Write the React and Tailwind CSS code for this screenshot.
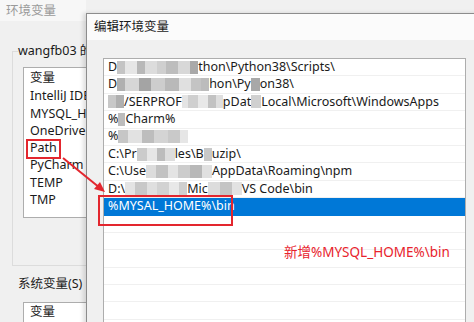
import React from "react";

const font = { fontFamily: '"Noto Sans", "Noto Sans CJK SC", sans-serif' };

// mosaic blocks standing in for the blurred parts of the paths
function Blur({ cells }) {
  return (
    <span className="inline-flex items-center h-[13px] align-middle shrink-0">
      {cells.map(([w, c], i) => (
        <span key={i} className="inline-block h-full" style={{ width: w, background: c }} />
      ))}
    </span>
  );
}

const rows = [
  [["D"], [[8, "#c4c4c4"], [12, "#e6e6e6"], [8, "#b8b8b8"], [12, "#dcdcdc"], [9, "#cfcfcf"], [12, "#bdbdbd"], [12, "#d8d8d8"], [8, "#a9a9a9"]], ["thon\\Python38\\Scripts\\"]],
  [["D"], [[8, "#b0b0b0"], [14, "#d6d6d6"], [12, "#a4a4a4"], [14, "#cdcdcd"], [14, "#b9b9b9"], [12, "#e0e0e0"], [10, "#c4c4c4"], [8, "#bcbcbc"]], ["hon\\Py"], [[9, "#a8a8a8"]], ["on38\\"]],
  [[[8, "#c8c8c8"], [8, "#b0b0b0"]], ["/SERPROF"], [[6, "#e4e4e4"], [10, "#cfcfcf"], [10, "#e8e8e8"], [8, "#c2c2c2"], [7, "#dedede"]], ["pDat"], [[10, "#d0d0d0"]], ["Local\\Microsoft\\WindowsApps"]],
  [["% "], [[7, "#bcbcbc"]], ["Charm%"]],
  [["%"], [[10, "#c6c6c6"], [14, "#e2e2e2"], [12, "#bdbdbd"], [14, "#d4d4d4"], [12, "#c9c9c9"], [8, "#e6e6e6"]]],
  [["C:\\Pr"], [[10, "#cbcbcb"], [10, "#e6e6e6"], [8, "#bcbcbc"], [10, "#dddddd"]], ["les\\B"], [[8, "#c8c8c8"]], ["uzip\\"]],
  [["C:\\Use"], [[10, "#dcdcdc"], [12, "#c2c2c2"], [10, "#e4e4e4"], [12, "#cccccc"], [12, "#b8b8b8"], [10, "#e0e0e0"]], ["AppData\\Roaming\\npm"]],
  [["D:\\"], [[10, "#e4e4e4"], [12, "#c8c8c8"], [10, "#dfdfdf"], [12, "#d2d2d2"], [10, "#e8e8e8"], [8, "#cfcfcf"]], ["Mic"], [[12, "#dcdcdc"], [12, "#c4c4c4"], [10, "#e2e2e2"]], ["VS Code\\bin"]],
];

function PathRow({ parts }) {
  return (
    <div className="h-[17.4px] flex items-center pl-[4px] border-b border-[#f0f0f0] whitespace-nowrap text-[12.5px] text-[#1a1a1a]">
      {parts.map((p, i) =>
        typeof p[0] === "string" ? <span key={i}>{p[0]}</span> : <Blur key={i} cells={p} />
      )}
    </div>
  );
}

export default function App() {
  const userVars = ["IntelliJ IDEA", "MYSQL_HOME", "OneDrive", "Path", "PyCharm", "TEMP", "TMP"];

  return (
    <div className="relative w-[474px] h-[322px] overflow-hidden bg-[#f0f0f0]" style={font}>
      {/* background window: 环境变量 */}
      <div className="flex flex-col h-full w-[86px] overflow-hidden">
        <div className="h-[22px] bg-[#f7f7f7] pl-[6px] pt-[1px] text-[12.5px] text-[#9a9a9a] leading-[20px] whitespace-nowrap">环境变量</div>
        <div className="relative pl-[12px] pt-[30px]">
          <div className="w-[200px] h-[215px] border-l border-t border-b border-[#dcdcdc] pl-[10px] pt-[15px]">
            <div className="h-[151px] bg-white border border-[#adadad] pl-[6px] text-[12.5px] text-[#1a1a1a]">
              <div className="h-[20px] flex items-center">变量</div>
              {userVars.map((v) => (
                <div key={v} className="h-[17.3px] flex items-center whitespace-nowrap">
                  {v === "Path" ? (
                    <span className="border-2 border-[#e3262e] -ml-[4px] px-[2px] h-[20px] flex items-center w-[35px]">Path</span>
                  ) : (
                    v
                  )}
                </div>
              ))}
            </div>
          </div>
          <div className="absolute left-[18px] top-[20px] bg-[#f0f0f0] pr-[1px] text-[12.5px] text-[#1a1a1a] leading-[20px] whitespace-nowrap">
            wangfb03 的用户变量(U)
          </div>
        </div>
        <div className="pl-[18px] pt-[8px] text-[12.5px] text-[#1a1a1a] leading-[20px] whitespace-nowrap">系统变量(S)</div>
        <div className="ml-[23px] mt-[8px] w-[200px] flex-1 bg-white border border-[#adadad] pl-[6px] text-[12.5px] text-[#1a1a1a]">
          <div className="h-[19px] flex items-center">变量</div>
        </div>
      </div>

      {/* edit dialog: 编辑环境变量 */}
      <div className="absolute left-[86px] top-[13px] w-[400px] h-[320px] flex flex-col border-l border-t border-[#8c8c8c] shadow-[-3px_0_4px_rgba(0,0,0,0.12)]">
        <div className="h-[26px] bg-[#fbfbfb] pl-[7px] flex items-center text-[12.5px] text-[#1a1a1a]">编辑环境变量</div>
        <div className="flex-1 bg-[#f0f0f0] pl-[16px] pt-[18px]">
          <div className="w-[363px] h-full bg-white border border-[#adadad]">
            {rows.map((r, i) => (
              <PathRow key={i} parts={r} />
            ))}
            <div className="h-[17.4px] flex items-center pl-[4px] bg-[#0078d7] text-white text-[12.5px] whitespace-nowrap">
              %MYSAL_HOME%\bin
            </div>
            {[0, 1, 2, 3, 4, 5].map((i) => (
              <div key={i} className="h-[17.4px] border-b border-[#f0f0f0]" />
            ))}
          </div>
        </div>
      </div>

      {/* annotations */}
      <div className="absolute left-[98px] top-[195px] w-[135px] h-[31px] border-2 border-[#e3262e]" />
      <div className="absolute left-[284px] top-[242px] text-[13.5px] leading-[20px] text-[#e8222c] whitespace-nowrap">
        新增%MYSQL_HOME%\bin
      </div>
      <svg className="absolute left-0 top-0" width="474" height="322">
        <line x1="63" y1="158" x2="100" y2="188" stroke="#e3262e" strokeWidth="2" />
        <polygon points="105,192 94,189 100,182" fill="#e3262e" />
      </svg>
    </div>
  );
}
